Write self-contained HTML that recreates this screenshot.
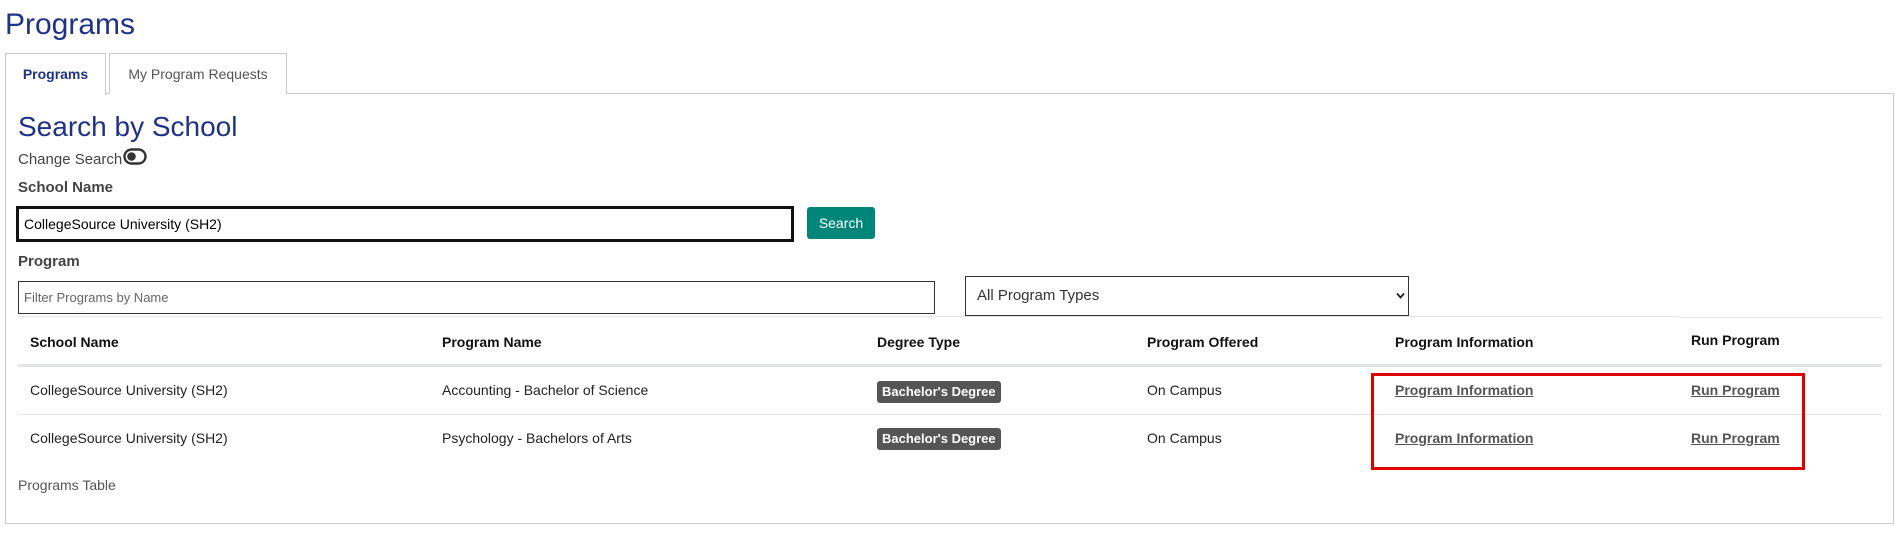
<!DOCTYPE html>
<html><head><meta charset="utf-8"><style>
*{box-sizing:border-box;margin:0;padding:0}
body{width:1900px;height:533px;background:#fff;font-family:"Liberation Sans",sans-serif;color:#222;position:relative;overflow:hidden}
.a{position:absolute;white-space:nowrap}
h1{position:absolute;left:5px;top:8px;font-size:30px;font-weight:normal;color:#1f3285}
.tab{position:absolute;top:53px;height:41px;border:1px solid #ccc;border-bottom:none;background:#fff;font-size:14px;text-align:center;line-height:40px}
.panel{position:absolute;left:5px;top:93px;width:1889px;height:431px;border:1px solid #ccc}
.lbl{font-size:15px;font-weight:bold;color:#444}
.th{font-size:14px;font-weight:bold;color:#111}
.td{font-size:14px;color:#222}
.badge{background:#555;color:#fff;font-weight:bold;font-size:13px;border-radius:3px;padding:3px 5px;line-height:16px}
.lk{font-size:14px;font-weight:bold;color:#555;text-decoration:underline}
.line{position:absolute;background:#e1e3e6}
</style></head><body>
<h1>Programs</h1>
<div class="panel"></div>
<div class="tab" style="left:5px;width:101px;color:#1f3285;font-weight:bold;height:42px">Programs</div>
<div class="tab" style="left:109px;width:178px;color:#555">My Program Requests</div>
<div class="a" style="left:18px;top:111px;font-size:28px;color:#1f3285">Search by School</div>
<div class="a" style="left:18px;top:151px;font-size:15px;color:#444">Change Search</div>
<svg class="a" style="left:123px;top:148px" width="24" height="17" viewBox="0 0 24 17"><rect x="1.5" y="1.5" width="21" height="14" rx="7" fill="none" stroke="#333" stroke-width="2.4"/><circle cx="8.5" cy="8.5" r="4.3" fill="#333"/></svg>
<div class="a lbl" style="left:18px;top:179px">School Name</div>
<div class="a" style="left:16px;top:206px;width:778px;height:36px;border:3px solid #111;font-size:14px;padding:7px 5px;color:#000">CollegeSource University (SH2)</div>
<div class="a" style="left:807px;top:207px;width:68px;height:32px;background:#00857a;border-radius:3px;color:#fff;font-size:14px;text-align:center;line-height:32px">Search</div>
<div class="a lbl" style="left:18px;top:253px">Program</div>
<div class="a" style="left:18px;top:281px;width:917px;height:33px;border:1px solid #333;font-size:13px;padding:8px 5px;color:#666">Filter Programs by Name</div>
<div class="a" style="left:965px;top:276px;width:444px;height:40px;border:1px solid #333;font-size:15px;padding:10px 11px;color:#333">All Program Types</div>
<svg class="a" style="left:1396px;top:291px" width="9" height="9" viewBox="0 0 9 9"><path d="M1 2.5 L4.5 6.5 L8 2.5" fill="none" stroke="#222" stroke-width="1.8"/></svg>
<div class="line" style="left:18px;top:316px;width:1661px;height:1px"></div>
<div class="line" style="left:1679px;top:317px;width:203px;height:1px"></div>
<div class="a th" style="left:30px;top:334px">School Name</div>
<div class="a th" style="left:442px;top:334px">Program Name</div>
<div class="a th" style="left:877px;top:334px">Degree Type</div>
<div class="a th" style="left:1147px;top:334px">Program Offered</div>
<div class="a th" style="left:1395px;top:334px">Program Information</div>
<div class="a th" style="left:1691px;top:332px">Run Program</div>
<div class="line" style="left:18px;top:364px;width:1864px;height:3px"></div>
<div class="a td" style="left:30px;top:382px">CollegeSource University (SH2)</div>
<div class="a td" style="left:442px;top:382px">Accounting - Bachelor of Science</div>
<div class="a badge" style="left:877px;top:381px">Bachelor's Degree</div>
<div class="a td" style="left:1147px;top:382px">On Campus</div>
<div class="a lk" style="left:1395px;top:382px">Program Information</div>
<div class="a lk" style="left:1691px;top:382px">Run Program</div>
<div class="line" style="left:18px;top:414px;width:1864px;height:1px"></div>
<div class="a td" style="left:30px;top:430px">CollegeSource University (SH2)</div>
<div class="a td" style="left:442px;top:430px">Psychology - Bachelors of Arts</div>
<div class="a badge" style="left:877px;top:428px">Bachelor's Degree</div>
<div class="a td" style="left:1147px;top:430px">On Campus</div>
<div class="a lk" style="left:1395px;top:430px">Program Information</div>
<div class="a lk" style="left:1691px;top:430px">Run Program</div>
<div class="a" style="left:1371px;top:373px;width:434px;height:97px;border:3px solid #e00000"></div>
<div class="a" style="left:18px;top:477px;font-size:14px;color:#555">Programs Table</div>
</body></html>
